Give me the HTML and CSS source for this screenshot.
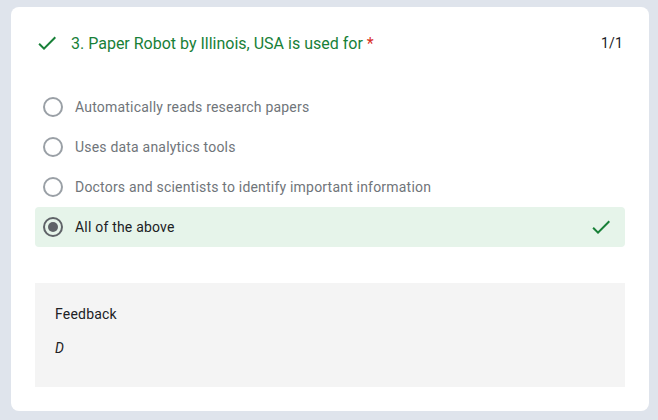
FILE: index.html
```html
<!DOCTYPE html>
<html>
<head>
<meta charset="utf-8">
<link rel="stylesheet" href="styles.css">
</head>
<body>
<div class="card">
  <div class="title-row">
    <svg class="check" viewBox="0 0 24 24" width="24" height="24"><path d="M9 16.17L4.83 12l-1.42 1.41L9 19 21 7l-1.41-1.41z" fill="#188038"/></svg>
    <div class="title">3. Paper Robot by Illinois, USA is used for <span class="req">*</span></div>
    <div class="score">1/1</div>
  </div>
  <div class="options">
    <div class="opt"><span class="radio"></span><span class="label">Automatically reads research papers</span></div>
    <div class="opt"><span class="radio"></span><span class="label">Uses data analytics tools</span></div>
    <div class="opt"><span class="radio"></span><span class="label">Doctors and scientists to identify important information</span></div>
    <div class="opt correct"><span class="radio on"></span><span class="label">All of the above</span>
      <svg class="check right" viewBox="0 0 24 24" width="24" height="24"><path d="M9 16.17L4.83 12l-1.42 1.41L9 19 21 7l-1.41-1.41z" fill="#188038"/></svg>
    </div>
  </div>
  <div class="feedback">
    <div class="fb-title">Feedback</div>
    <div class="fb-text">D</div>
  </div>
</div>
</body>
</html>
```

FILE: styles.css
```css
* { box-sizing: border-box; }
html, body { margin: 0; }
body {
  background: #dfe4ec;
  padding: 7px 9px 9px 11px;
  font-family: Roboto, "Liberation Sans", sans-serif;
  height: 420px;
}
.card {
  background: #fff;
  border-radius: 8px;
  height: 404px;
  padding: 24px 24px 24px 24px;
}
.title-row {
  display: flex;
  align-items: center;
  height: 24px;
}
.check { flex: none; display: block; }
.title {
  margin-left: 12px;
  color: #188038;
  font-size: 16px;
  flex: 1;
}
.req { color: #d93025; }
.score {
  color: #202124;
  font-size: 14px;
  letter-spacing: 0.2px;
  padding-right: 2px;
}
.options {
  margin-top: 32px;
}
.opt {
  display: flex;
  align-items: center;
  height: 40px;
  padding-left: 8px;
  padding-right: 12px;
  border-radius: 4px;
}
.radio {
  width: 20px;
  height: 20px;
  border: 2px solid #9aa0a6;
  border-radius: 50%;
  flex: none;
  display: flex;
  align-items: center;
  justify-content: center;
}
.radio.on { border-color: #5f6368; }
.radio.on::after {
  content: "";
  width: 10px;
  height: 10px;
  border-radius: 50%;
  background: #5f6368;
}
.label {
  margin-left: 12px;
  font-size: 14px;
  letter-spacing: 0.2px;
  color: #70757a;
  flex: 1;
}
.correct {
  background: #e6f4ea;
}
.correct .label { color: #202124; }
.feedback {
  margin-top: 36px;
  background: #f4f4f4;
  height: 104px;
  padding: 21px 20px;
}
.fb-title {
  font-size: 14px;
  letter-spacing: 0.2px;
  color: #202124;
  line-height: 20px;
}
.fb-text {
  margin-top: 14px;
  font-size: 14px;
  letter-spacing: 0.2px;
  font-style: italic;
  color: #202124;
  line-height: 20px;
}
```
